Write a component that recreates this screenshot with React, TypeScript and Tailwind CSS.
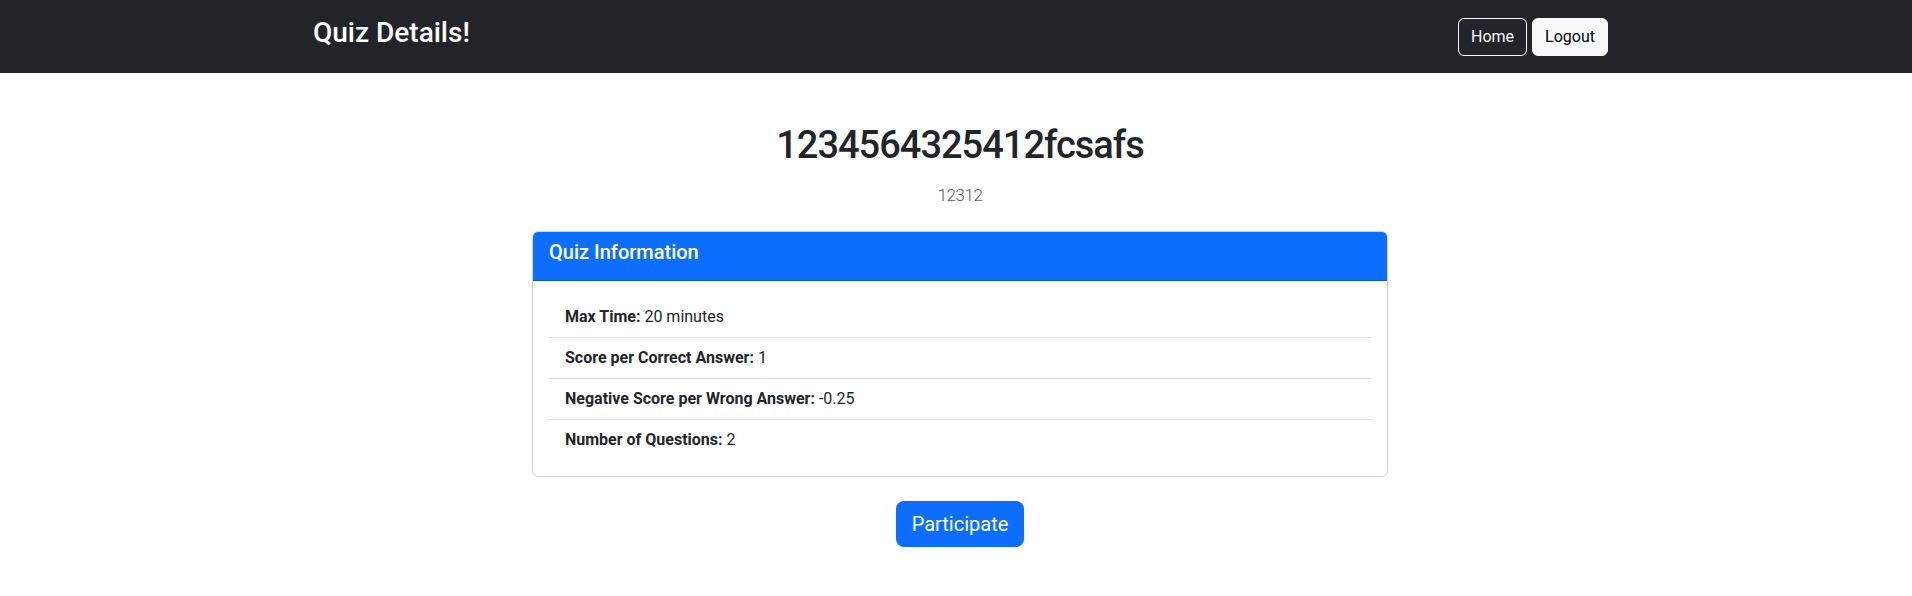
import React from "react";

const items: { label: string; value: string }[] = [
  { label: "Max Time:", value: "20 minutes" },
  { label: "Score per Correct Answer:", value: "1" },
  { label: "Negative Score per Wrong Answer:", value: "-0.25" },
  { label: "Number of Questions:", value: "2" },
];

export default function App() {
  return (
    <div
      className="min-h-[596px] bg-white text-[#212529]"
      style={{ fontFamily: "Roboto, 'Noto Sans', sans-serif" }}
    >
      <nav className="h-[73px] bg-[#212529] pl-2">
        <div className="mx-auto flex h-full w-[1320px] items-center justify-between pl-[13px] pr-3">
          <h3 className="mb-2 text-[28px] font-medium leading-[34px] text-white">Quiz Details!</h3>
          <div className="flex items-center gap-[5px]">
            <button className="h-[38px] rounded-[6px] border border-[#f8f9fa] px-3 text-base leading-6 text-[#f8f9fa]">
              Home
            </button>
            <button className="h-[38px] rounded-[6px] border border-[#f8f9fa] bg-[#f8f9fa] px-3 text-base leading-6 text-black">
              Logout
            </button>
          </div>
        </div>
      </nav>

      <div className="pl-2">
        <main className="mx-auto mt-12 flex w-[1320px] flex-col items-center">
          <h1 className="mb-[11px] text-[38px] font-medium leading-[48px] tracking-[-1px]">1234564325412fcsafs</h1>
          <p className="mb-[21px] text-[17px] font-light leading-[30px] tracking-[-0.5px] text-[#595c5f]">12312</p>

          <div className="w-[856px] overflow-hidden rounded-[6px] border border-[rgba(0,0,0,0.175)]">
            <div className="border-b border-[rgba(0,0,0,0.175)] bg-[#0d6efd] px-4 pt-2 pb-2">
              <h5 className="mb-2 text-[20px] font-medium leading-6 text-white">Quiz Information</h5>
            </div>
            <div className="p-4">
              <ul>
                {items.map((it, i) => (
                  <li
                    key={it.label}
                    className={
                      "px-4 py-2 text-base leading-6 " +
                      (i < items.length - 1 ? "border-b border-[#dee2e6]" : "")
                    }
                  >
                    <strong className="font-bold">{it.label}</strong> {it.value}
                  </li>
                ))}
              </ul>
            </div>
          </div>

          <button className="mt-6 rounded-[8px] bg-[#0d6efd] px-4 py-2 text-[20px] leading-[30px] text-white">
            Participate
          </button>
        </main>
      </div>
    </div>
  );
}
